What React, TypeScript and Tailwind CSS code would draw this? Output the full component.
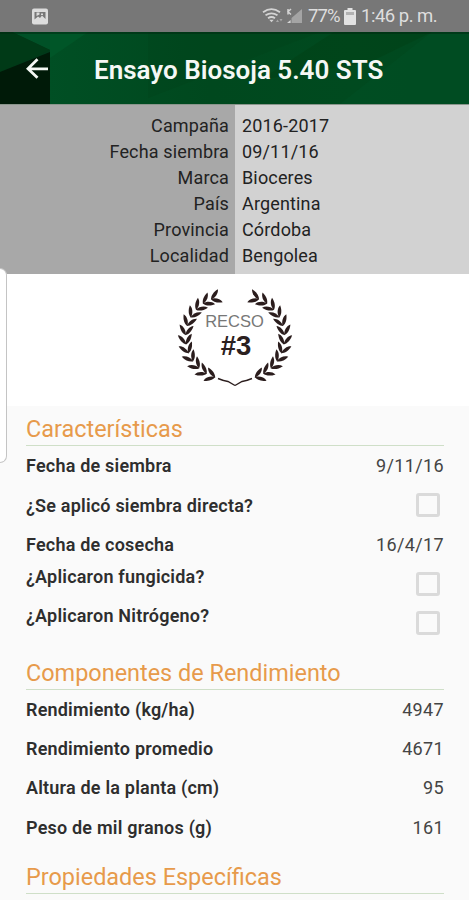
import { clsx } from "clsx";

type Row = {
  label: string;
  value?: string;
  checkbox?: boolean;
  raised?: boolean;
};

const TRIAL_INFO = [
  ["Campaña", "2016-2017"],
  ["Fecha siembra", "09/11/16"],
  ["Marca", "Bioceres"],
  ["País", "Argentina"],
  ["Provincia", "Córdoba"],
  ["Localidad", "Bengolea"],
];

const SECTIONS: { title: string; rows: Row[] }[] = [
  {
    title: "Características",
    rows: [
      { label: "Fecha de siembra", value: "9/11/16" },
      { label: "¿Se aplicó siembra directa?", checkbox: true },
      { label: "Fecha de cosecha", value: "16/4/17" },
      { label: "¿Aplicaron fungicida?", checkbox: true, raised: true },
      { label: "¿Aplicaron Nitrógeno?", checkbox: true, raised: true },
    ],
  },
  {
    title: "Componentes de Rendimiento",
    rows: [
      { label: "Rendimiento (kg/ha)", value: "4947" },
      { label: "Rendimiento promedio", value: "4671" },
      { label: "Altura de la planta (cm)", value: "95" },
      { label: "Peso de mil granos (g)", value: "161" },
    ],
  },
  { title: "Propiedades Específicas", rows: [] },
];

function StatusBar() {
  return (
    <div className="flex h-8 shrink-0 items-center bg-[#777777] pl-8 text-[#dedede]">
      <svg width="16" height="17" viewBox="0 0 16 17">
        <rect x="0" y="0.5" width="16" height="16" rx="2" fill="#dcdcdc" />
        <path d="M2.500 4h11v7l-3.500-3.500-2 2.500-2-1.500-3.500 3z" fill="#777" />
        <path d="M4.500 4.500h3v2l-3 1.500zM9 5.500h2v1.500H9z" fill="#dcdcdc" />
      </svg>
      <svg className="ml-[214px]" width="42" height="18" viewBox="0 0 42 18" fill="none">
        <g stroke="#d4d4d4" strokeWidth="1.800">
          <path d="M1 5.200q8.500-6 17 0" />
          <path d="M3.500 8.300q6-4 12 0" />
          <path d="M6 11.200q3.500-2.400 7 0" />
        </g>
        <path d="M7.300 12.700h4.400L9.500 15.300z" fill="#d4d4d4" />
        <path d="M14 15l1.500-2.500L17 15zM17.500 12h3L19 14.500z" fill="#a8a8a8" />
        <path d="M26 2v5.500M29 2l-3 2.800 3 2.700" stroke="#d4d4d4" strokeWidth="1.500" />
        <path d="M25 16l3.600-3v3z" fill="#d4d4d4" />
        <path d="M40 2v14H29.500V11z" fill="#a4a4a4" />
      </svg>
      <span className="w-[37px] pt-[2px] pl-[4px] text-[18.500px] whitespace-nowrap tracking-[-0.900px]">
        77%
      </span>
      <svg className="ml-[3px]" width="12" height="17" viewBox="0 0 12 17">
        <path
          d="M3.500 0h5v2H11a1 1 0 0 1 1 1v13a1 1 0 0 1-1 1H1a1 1 0 0 1-1-1V3a1 1 0 0 1 1-1h2.500z"
          fill="#e2e2e2"
        />
        <path d="M2 4h8v3H2z" fill="#b2b2b2" />
      </svg>
      <span className="ml-[5px] pt-[2px] text-[18.500px] whitespace-nowrap tracking-[-0.500px]">
        1:46 p. m.
      </span>
    </div>
  );
}

function Header() {
  return (
    <header className="relative flex h-[72px] shrink-0 items-center bg-[#004d20]">
      <svg className="absolute inset-0" width="469" height="72" viewBox="0 0 469 72">
        <defs>
          <linearGradient id="base" x1="0" x2="1">
            <stop offset="0.1" stopColor="#004f24" />
            <stop offset="0.45" stopColor="#00481e" />
            <stop offset="0.75" stopColor="#004a1f" />
            <stop offset="1" stopColor="#00481f" />
          </linearGradient>
        </defs>
        <rect width="469" height="72" fill="url(#base)" />
        <path d="M50 0h38L50 26z" fill="#005628" />
        <path d="M148 0h172l-172 66z" fill="#003f16" opacity="0.25" />
        <path d="M334 0h98l-62 30-110 18z" fill="#003c12" opacity="0.35" />
        <path d="M432 0h37v72H340z" fill="#005026" opacity="0.5" />
        <rect width="50" height="72" fill="#00391a" />
        <path d="M12 0h38v18z" fill="#005127" />
        <path d="M0 0h12l38 18L0 40z" fill="#003a17" />
        <path d="M0 40l50-20v52H0z" fill="#001a08" />
        <rect width="469" height="2" fill="#00280f" opacity="0.5" />
      </svg>
      <svg
        className="relative ml-[26px]"
        width="23"
        height="22"
        viewBox="0 0 23 22"
        fill="none"
        stroke="#f4f8f4"
        strokeWidth="2.800"
      >
        <path d="M22 11.800H2.500M11.500 2.300L2 11.800l9.500 9" />
      </svg>
      <h1 className="relative ml-[45px] pt-1 text-[26px] font-semibold whitespace-nowrap text-[#f5f8f5]">
        Ensayo Biosoja 5.40 STS
      </h1>
    </header>
  );
}

function TrialInfo() {
  return (
    <div className="flex h-[170px] shrink-0 border-t border-[#8a958c] text-[18px] leading-[26.100px] tracking-[0.150px] text-[#222]">
      <div className="w-[235px] bg-[#a8a8a8] pt-[8px] pr-[6px] text-right">
        {TRIAL_INFO.map(([label]) => (
          <p key={label}>{label}</p>
        ))}
      </div>
      <div className="flex-1 bg-[#d2d2d2] pt-[8px] pl-[7px]">
        {TRIAL_INFO.map(([label, value]) => (
          <p key={label}>{value}</p>
        ))}
      </div>
    </div>
  );
}

// Leaf pairs follow the arc from the tip of the branch down to its base.
const LEAF_ANGLES = Array.from({ length: 12 }, (_, i) => 250 - i * 12.8);

function Branch() {
  return (
    <>
      {LEAF_ANGLES.map((angle) => {
        const rad = (angle * Math.PI) / 180;
        const x = 50 + 41.5 * Math.cos(rad);
        const y = 50.5 + 41.5 * Math.sin(rad);
        return (
          <g key={angle} transform={`translate(${x} ${y}) rotate(${angle + 90})`}>
            <path d="M-2 0.300C-1-3 2.500-6 8-7 7-3 3 0-2 0.300z" />
            <path d="M-2-0.300C-1 3 2.500 6 8 7 7 3 3 0-2-0.300z" />
          </g>
        );
      })}
      <path d="M41 91.500q6 2.500 10 3l7 4" fill="none" stroke="#2b1d1d" strokeWidth="1.400" />
    </>
  );
}

function Ranking() {
  return (
    <div className="flex h-[132px] shrink-0 justify-center bg-white pt-[13px]">
      <div className="relative h-[102px] w-[116px]">
        <svg width="116" height="102" viewBox="0 0 116 102" fill="#2b1d1d">
          <Branch />
          <g transform="translate(116 0) scale(-1 1)">
            <Branch />
          </g>
        </svg>
        <div className="absolute inset-x-0 top-[24px] flex flex-col items-center font-['Liberation_Sans']">
          <span className="text-[16.500px] leading-[20px] text-[#777]">RECSO</span>
          <span className="mt-[1px] ml-[3px] text-[27.500px] leading-[28px] font-bold text-[#2b2020]">
            #3
          </span>
        </div>
      </div>
    </div>
  );
}

function DetailRow({ row }: { row: Row }) {
  return (
    <div className="flex h-[39.250px] items-center justify-between">
      <span
        className={clsx(
          "text-[18px] font-semibold tracking-[0.200px] whitespace-nowrap text-[#2e2e2e]",
          row.raised && "pb-[14px]",
        )}
      >
        {row.label}
      </span>
      {row.checkbox ? (
        <span className="mr-[4px] size-6 rounded-[3px] border-[3px] border-[#dadada]" />
      ) : (
        <span className="text-[18px] tracking-[0.350px] text-[#444]">{row.value}</span>
      )}
    </div>
  );
}

export default function App() {
  return (
    <div className="relative flex h-[900px] w-[469px] flex-col overflow-hidden bg-[#fafafa] font-[Roboto,sans-serif]">
      <StatusBar />
      <Header />
      <TrialInfo />
      <Ranking />
      <main className="shrink-0 pr-[25px] pl-[26px]">
        {SECTIONS.map((section, i) => (
          <section key={section.title}>
            <h2
              className={clsx(
                "flex items-end border-b-[1.500px] border-[#cfdfc8] pb-[3px] text-[23.450px] leading-[26px] text-[#e79a4b]",
                i === 0 ? "h-[40.250px]" : "h-[47.250px]",
              )}
            >
              {section.title}
            </h2>
            {section.rows.map((row) => (
              <DetailRow key={row.label} row={row} />
            ))}
          </section>
        ))}
      </main>
      {/* edge panel handle */}
      <div className="absolute top-[268px] left-0 h-[195px] w-[7px] rounded-r-[7px] border border-l-0 border-[#c4c4c4] bg-white" />
    </div>
  );
}
